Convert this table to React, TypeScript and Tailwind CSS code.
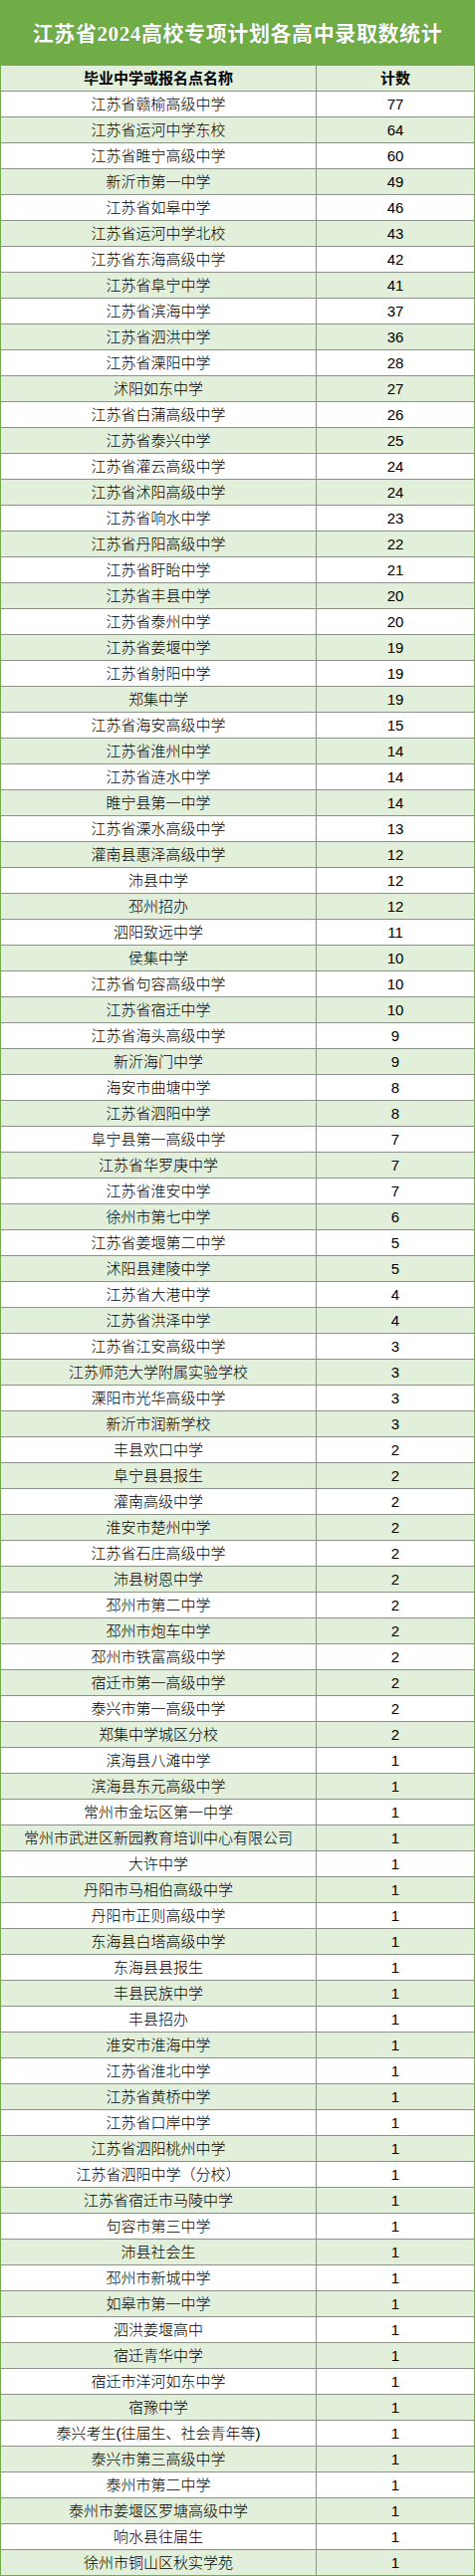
const rows: [string, number][] = [
  ["江苏省赣榆高级中学", 77],
  ["江苏省运河中学东校", 64],
  ["江苏省睢宁高级中学", 60],
  ["新沂市第一中学", 49],
  ["江苏省如皋中学", 46],
  ["江苏省运河中学北校", 43],
  ["江苏省东海高级中学", 42],
  ["江苏省阜宁中学", 41],
  ["江苏省滨海中学", 37],
  ["江苏省泗洪中学", 36],
  ["江苏省溧阳中学", 28],
  ["沭阳如东中学", 27],
  ["江苏省白蒲高级中学", 26],
  ["江苏省泰兴中学", 25],
  ["江苏省灌云高级中学", 24],
  ["江苏省沭阳高级中学", 24],
  ["江苏省响水中学", 23],
  ["江苏省丹阳高级中学", 22],
  ["江苏省盱眙中学", 21],
  ["江苏省丰县中学", 20],
  ["江苏省泰州中学", 20],
  ["江苏省姜堰中学", 19],
  ["江苏省射阳中学", 19],
  ["郑集中学", 19],
  ["江苏省海安高级中学", 15],
  ["江苏省淮州中学", 14],
  ["江苏省涟水中学", 14],
  ["睢宁县第一中学", 14],
  ["江苏省溧水高级中学", 13],
  ["灌南县惠泽高级中学", 12],
  ["沛县中学", 12],
  ["邳州招办", 12],
  ["泗阳致远中学", 11],
  ["侯集中学", 10],
  ["江苏省句容高级中学", 10],
  ["江苏省宿迁中学", 10],
  ["江苏省海头高级中学", 9],
  ["新沂海门中学", 9],
  ["海安市曲塘中学", 8],
  ["江苏省泗阳中学", 8],
  ["阜宁县第一高级中学", 7],
  ["江苏省华罗庚中学", 7],
  ["江苏省淮安中学", 7],
  ["徐州市第七中学", 6],
  ["江苏省姜堰第二中学", 5],
  ["沭阳县建陵中学", 5],
  ["江苏省大港中学", 4],
  ["江苏省洪泽中学", 4],
  ["江苏省江安高级中学", 3],
  ["江苏师范大学附属实验学校", 3],
  ["溧阳市光华高级中学", 3],
  ["新沂市润新学校", 3],
  ["丰县欢口中学", 2],
  ["阜宁县县报生", 2],
  ["灌南高级中学", 2],
  ["淮安市楚州中学", 2],
  ["江苏省石庄高级中学", 2],
  ["沛县树恩中学", 2],
  ["邳州市第二中学", 2],
  ["邳州市炮车中学", 2],
  ["邳州市铁富高级中学", 2],
  ["宿迁市第一高级中学", 2],
  ["泰兴市第一高级中学", 2],
  ["郑集中学城区分校", 2],
  ["滨海县八滩中学", 1],
  ["滨海县东元高级中学", 1],
  ["常州市金坛区第一中学", 1],
  ["常州市武进区新园教育培训中心有限公司", 1],
  ["大许中学", 1],
  ["丹阳市马相伯高级中学", 1],
  ["丹阳市正则高级中学", 1],
  ["东海县白塔高级中学", 1],
  ["东海县县报生", 1],
  ["丰县民族中学", 1],
  ["丰县招办", 1],
  ["淮安市淮海中学", 1],
  ["江苏省淮北中学", 1],
  ["江苏省黄桥中学", 1],
  ["江苏省口岸中学", 1],
  ["江苏省泗阳桃州中学", 1],
  ["江苏省泗阳中学（分校）", 1],
  ["江苏省宿迁市马陵中学", 1],
  ["句容市第三中学", 1],
  ["沛县社会生", 1],
  ["邳州市新城中学", 1],
  ["如皋市第一中学", 1],
  ["泗洪姜堰高中", 1],
  ["宿迁青华中学", 1],
  ["宿迁市洋河如东中学", 1],
  ["宿豫中学", 1],
  ["泰兴考生(往届生、社会青年等)", 1],
  ["泰兴市第三高级中学", 1],
  ["泰州市第二中学", 1],
  ["泰州市姜堰区罗塘高级中学", 1],
  ["响水县往届生", 1],
  ["徐州市铜山区秋实学苑", 1],
];

export default function App() {
  return (
    <div className="w-[477px] bg-white font-['Liberation_Sans','Noto_Sans_CJK_SC',sans-serif] text-black">
      {/* Title band */}
      <div className="h-[66px] bg-[#70ad47] flex items-center justify-center pt-[3px]">
        <h1 className="text-[21px] font-bold tracking-[0.6px] text-white font-['Liberation_Serif','Noto_Sans_CJK_SC',serif] [text-shadow:0_0_1px_rgba(40,80,40,0.5)]">
          江苏省2024高校专项计划各高中录取数统计
        </h1>
      </div>

      {/* Table */}
      <div className="border-x border-[#70ad47]">
        <div className="grid grid-cols-[317px_1fr] h-[26px] border-b border-[#70ad47] bg-[#e2efda] text-[15px] font-bold">
          <div className="border-r border-[#70ad47] flex items-center justify-center pt-[1px]">毕业中学或报名点名称</div>
          <div className="flex items-center justify-center pt-[1px]">计数</div>
        </div>
        {rows.map(([name, count], i) => (
          <div
            key={name}
            className={`grid grid-cols-[317px_1fr] h-[26px] border-b border-[#70ad47] text-[15px] font-light ${
              i % 2 === 1 ? "bg-[#e2efda]" : "bg-white"
            }`}
          >
            <div className="border-r border-[#70ad47] flex items-center justify-center pt-[2px] whitespace-nowrap">{name}</div>
            <div className="flex items-center justify-center pt-[2px]">{count}</div>
          </div>
        ))}
      </div>
    </div>
  );
}
